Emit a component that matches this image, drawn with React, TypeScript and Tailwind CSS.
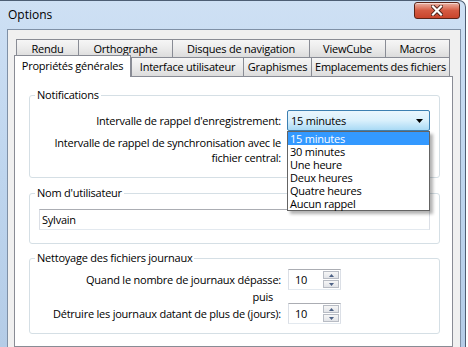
import React from 'react';

const ROW1 = [
  { label: 'Rendu', w: 'w-[62px]' },
  { label: 'Orthographe', w: 'w-[94px]' },
  { label: 'Disques de navigation', w: 'w-[137px]' },
  { label: 'ViewCube', w: 'w-[76px]' },
  { label: 'Macros', w: 'w-[65px] border-r' },
];

const ROW2 = [
  { label: 'Interface utilisateur', w: 'w-[112px]' },
  { label: 'Graphismes', w: 'w-[68px]' },
  { label: 'Emplacements des fichiers', w: 'w-[139px] border-r' },
];

const INTERVALS = ['15 minutes', '30 minutes', 'Une heure', 'Deux heures', 'Quatre heures', 'Aucun rappel'];

function CloseButton() {
  return (
    <div className="ml-auto mr-[5px] mt-[1px] flex h-[17px] w-[46px] items-center justify-center rounded-[3px] border border-[#5b2418] bg-gradient-to-b from-[#eab2a5] via-[#d45a42] to-[#c8442b] shadow-[inset_0_1px_0_rgba(255,255,255,0.5)]">
      <svg width="12" height="11" viewBox="0 0 12 11">
        <path d="M2 1.5 L10 9.5 M10 1.5 L2 9.5" stroke="#4a2018" strokeWidth="4" strokeLinecap="square" />
        <path d="M2 1.5 L10 9.5 M10 1.5 L2 9.5" stroke="#ffffff" strokeWidth="2.2" strokeLinecap="square" />
      </svg>
    </div>
  );
}

function Tab({ label, w, className = '' }: { label: string; w: string; className?: string }) {
  return (
    <div
      className={`flex items-center justify-center border-l border-t border-[#898c95] bg-gradient-to-b from-[#f6f6f6] via-[#ebebeb] to-[#dcdcdc] leading-[14px] ${w} ${className}`}
    >
      {label}
    </div>
  );
}

function Combo({ value }: { value: string }) {
  return (
    <div className="flex h-[21px] w-[143px] items-center rounded-[2px] border border-[#3c7fb1] bg-gradient-to-b from-[#eaf6fd] via-[#d9f0fc] to-[#a9daf5] pl-[3px] pr-[6px]">
      <span className="flex-1 leading-[14px]">{value}</span>
      <svg width="7" height="4" viewBox="0 0 7 4">
        <polygon points="0,0 7,0 3.5,4" fill="#000" />
      </svg>
    </div>
  );
}

function Spin({ value }: { value: string }) {
  return (
    <div className="ml-[1px] flex h-[21px] w-[53px] items-stretch border border-[#abadb3] border-l-[#dbdfe6] border-r-[#dbdfe6] border-b-[#e3e9ef] bg-white py-[1px] pr-[1px]">
      <span className="flex flex-1 items-center pl-[6px] leading-[14px]">{value}</span>
      <div className="flex w-[16px] flex-col gap-[1px]">
        <div className="flex flex-1 items-center justify-center border border-[#b8bcc4] bg-gradient-to-b from-[#f6f6f6] to-[#e2e4e8]">
          <svg width="5" height="3" viewBox="0 0 5 3">
            <polygon points="0,3 5,3 2.5,0" fill="#4d6185" />
          </svg>
        </div>
        <div className="flex flex-1 items-center justify-center border border-[#b8bcc4] bg-gradient-to-b from-[#f6f6f6] to-[#e2e4e8]">
          <svg width="5" height="3" viewBox="0 0 5 3">
            <polygon points="0,0 5,0 2.5,3" fill="#4d6185" />
          </svg>
        </div>
      </div>
    </div>
  );
}

function Group({ title, className = '', children }: { title: string; className?: string; children: React.ReactNode }) {
  return (
    <fieldset className={`w-[411px] rounded-[3px] border border-[#d5dfe5] ${className}`}>
      <legend className="ml-[5px] h-[16px] px-[2px] leading-[16px]">{title}</legend>
      {children}
    </fieldset>
  );
}

export default function App() {
  return (
    <div className="h-[347px] w-[468px] overflow-hidden bg-white font-['Open_Sans',sans-serif] text-[11px] tracking-[-0.23px] text-black">
      <div className="flex h-[347px] w-[466px] flex-col rounded-tr-[7px] border-r border-t border-[#4d5e74] bg-gradient-to-b from-[#cee0f4] via-[#bed5ee] to-[#b4cce7]">
        <div className="flex h-[28px] items-start">
          <span className="pl-[8px] pt-[6px] text-[12px] leading-[16px] tracking-normal">Options</span>
          <CloseButton />
        </div>

        <div className="ml-[7px] mr-[4px] flex flex-1 flex-col border-l border-r border-t border-[#7f90a6] bg-[#f0f0f0] pl-[6px] pt-[9px]">
          <div className="ml-[2px] flex h-[18px]">
            {ROW1.map((t) => (
              <Tab key={t.label} label={t.label} w={t.w} className="pt-[1px]" />
            ))}
          </div>
          <div className="relative z-10 -mt-[2px] flex h-[21px] items-end">
            <div className="mb-[-1px] flex h-[22px] w-[117px] items-center justify-center border-l border-r border-t border-[#898c95] bg-white pb-[2px] leading-[14px]">
              Propriétés générales
            </div>
            {ROW2.map((t) => (
              <Tab key={t.label} label={t.label} w={t.w} className="h-[19px]" />
            ))}
          </div>

          <div className="w-[439px] flex-1 border border-[#898c95] bg-white pl-[14px] pt-[10px]">
            <Group title="Notifications" className="pb-[12px]">
              <div className="mt-[7px] grid grid-cols-[251px_143px] gap-x-[6px] gap-y-[4px]">
                <div className="flex h-[21px] items-center justify-end leading-[14px]">
                  Intervalle de rappel d'enregistrement:
                </div>
                <div className="relative z-20">
                  <Combo value="15 minutes" />
                  <div className="absolute left-0 top-[21px] w-[143px] border border-[#646464] bg-white shadow-[3px_3px_3px_rgba(0,0,0,0.3)]">
                    {INTERVALS.map((v, i) => (
                      <div
                        key={v}
                        className={`h-[13px] pl-[2px] leading-[13px] ${i === 0 ? 'bg-[#3399ff] text-white' : ''}`}
                      >
                        {v}
                      </div>
                    ))}
                  </div>
                </div>
                <div className="text-right leading-[15px]">
                  Intervalle de rappel de synchronisation avec le
                  <br />
                  fichier central:
                </div>
                <div className="pt-[4px]">
                  <Combo value="" />
                </div>
              </div>
            </Group>

            <Group title="Nom d'utilisateur" className="mt-[7px] pb-[13px]">
              <div className="ml-[9px] mt-[8px] flex h-[21px] w-[391px] items-center border border-[#abadb3] border-b-[#e3e9ef] border-l-[#dbdfe6] border-r-[#dbdfe6] bg-white pl-[2px] leading-[14px]">
                Sylvain
              </div>
            </Group>

            <Group title="Nettoyage des fichiers journaux" className="mt-[6px] pb-[9px]">
              <div className="mt-[3px] grid grid-cols-[251px_143px] gap-x-[6px]">
                <div className="flex h-[21px] items-center justify-end leading-[14px]">
                  Quand le nombre de journaux dépasse:
                </div>
                <Spin value="10" />
                <div className="h-[13px] pr-[8px] text-right leading-[13px]">puis</div>
                <div />
                <div className="flex h-[21px] items-center justify-end leading-[14px]">
                  Détruire les journaux datant de plus de (jours):
                </div>
                <Spin value="10" />
              </div>
            </Group>
          </div>
        </div>
      </div>
    </div>
  );
}
